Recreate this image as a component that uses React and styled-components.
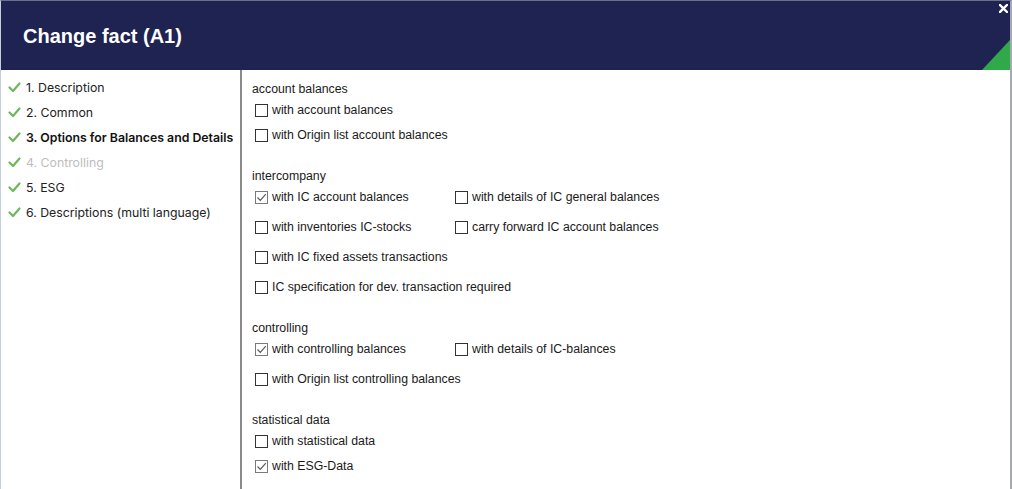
import styled, { createGlobalStyle } from "styled-components"

const GlobalStyle = createGlobalStyle`
  html, body {
    margin: 0;
    padding: 0;
    background: #ffffff;
  }
  * { box-sizing: border-box; }
`

const steps = [
  { label: "1. Description", state: "done" },
  { label: "2. Common", state: "done" },
  { label: "3. Options for Balances and Details", state: "active" },
  { label: "4. Controlling", state: "disabled" },
  { label: "5. ESG", state: "done" },
  { label: "6. Descriptions (multi language)", state: "done" },
]

const sections = [
  {
    title: "account balances",
    columns: 1,
    items: [
      { label: "with account balances" },
      { label: "with Origin list account balances" },
    ],
  },
  {
    title: "intercompany",
    columns: 2,
    items: [
      { label: "with IC account balances", checked: true },
      { label: "with details of IC general balances" },
      { label: "with inventories IC-stocks" },
      { label: "carry forward IC account balances" },
      { label: "with IC fixed assets transactions", wide: true },
      { label: "IC specification for dev. transaction required", wide: true },
    ],
  },
  {
    title: "controlling",
    columns: 2,
    items: [
      { label: "with controlling balances", checked: true },
      { label: "with details of IC-balances" },
      { label: "with Origin list controlling balances", wide: true },
    ],
  },
  {
    title: "statistical data",
    columns: 1,
    items: [
      { label: "with statistical data" },
      { label: "with ESG-Data", checked: true },
    ],
  },
]

export default function App () {
  return (
    <>
      <GlobalStyle />
      <Dialog>
        <Header>
          <Title>Change fact (A1)</Title>
          <CloseButton aria-label="close">
            <svg width="9" height="9" viewBox="0 0 9 9">
              <path d="M1 1 L8 8 M8 1 L1 8" stroke="#fff" strokeWidth="2.4" strokeLinecap="square" />
            </svg>
          </CloseButton>
          <Corner />
        </Header>

        <Body>
          <Sidebar>
            {steps.map(step => (
              <Step key={step.label} $state={step.state}>
                <CheckIcon width="13" height="11" viewBox="0 0 13 11">
                  <path d="M1.5 5.5 L5 9 L11.5 1.5" fill="none" stroke="#6cb85a" strokeWidth="2.2" strokeLinecap="round" strokeLinejoin="round" />
                </CheckIcon>
                {step.label}
              </Step>
            ))}
          </Sidebar>

          <Content>
            {sections.map(section => (
              <Section key={section.title}>
                <SectionTitle>{section.title}</SectionTitle>
                <Options $columns={section.columns}>
                  {section.items.map(item => (
                    <Option key={item.label} $wide={item.wide}>
                      <Box $checked={item.checked}>
                        {item.checked && (
                          <svg width="11" height="11" viewBox="0 0 11 11">
                            <path d="M1.5 5.5 L4.3 8.3 L9.8 2.2" fill="none" stroke="#5a5a5a" strokeWidth="1.2" />
                          </svg>
                        )}
                      </Box>
                      {item.label}
                    </Option>
                  ))}
                </Options>
              </Section>
            ))}
          </Content>
        </Body>
      </Dialog>
    </>
  )
}

const Dialog = styled.div`
  width: 1012px;
  height: 489px;
  display: flex;
  flex-direction: column;
  border-top: 1px solid #6b7088;
  border-left: 1px solid #c6ceda;
  border-right: 2px solid #a7a9b2;
  overflow: hidden;
  background: #fff;
`

const Header = styled.header`
  position: relative;
  height: 69px;
  flex: none;
  display: flex;
  align-items: center;
  padding-left: 22px;
  padding-top: 2px;
  background: #1f2352;
`

const Title = styled.h1`
  margin: 0;
  font-family: "Liberation Sans", Arial, sans-serif;
  font-size: 20px;
  font-weight: 700;
  color: #ffffff;
`

const CloseButton = styled.button`
  position: absolute;
  top: 3px;
  right: 2px;
  padding: 0;
  border: 0;
  width: 9px;
  height: 9px;
  display: flex;
  background: transparent;
`

const Corner = styled.div`
  position: absolute;
  right: 0;
  bottom: 0;
  width: 28px;
  height: 30px;
  background: #30a94b;
  clip-path: polygon(100% 0, 100% 100%, 0 100%);
`

const Body = styled.div`
  flex: 1;
  display: flex;
  min-height: 0;
`

const Sidebar = styled.nav`
  width: 241px;
  flex: none;
  padding-top: 5px;
  padding-left: 7px;
  border-right: 2px solid #8a8a8a;
  display: flex;
  flex-direction: column;
`

const Step = styled.div`
  height: 25px;
  display: flex;
  align-items: center;
  gap: 5px;
  font-family: Inter, "Noto Sans", sans-serif;
  font-size: 12.3px;
  font-weight: ${p => (p.$state === "active" ? 600 : 400)};
  color: ${p => (p.$state === "disabled" ? "#bdbdbd" : p.$state === "active" ? "#111" : "#222")};
  white-space: nowrap;
`

const CheckIcon = styled.svg`
  flex: none;
  margin-top: -1px;
`

const Content = styled.main`
  flex: 1;
  padding: 10px 0 0 10px;
  display: flex;
  flex-direction: column;
  gap: 20px;
  font-family: "Liberation Sans", Arial, sans-serif;
  font-size: 12.3px;
  color: #1a1a1a;
`

const Section = styled.section`
  display: flex;
  flex-direction: column;
`

const SectionTitle = styled.div`
  height: 18px;
  line-height: 18px;
`

const Options = styled.div`
  display: grid;
  grid-template-columns: ${p => (p.$columns === 2 ? "200px 260px" : "460px")};
  row-gap: ${p => (p.$columns === 2 ? "6px" : "1px")};
  justify-content: start;
`

const Option = styled.label`
  height: 24px;
  display: flex;
  align-items: center;
  gap: 4px;
  padding-left: 3px;
  white-space: nowrap;
  grid-column: ${p => (p.$wide ? "1 / -1" : "auto")};
`

const Box = styled.span`
  width: 13px;
  height: 13px;
  flex: none;
  display: flex;
  align-items: center;
  justify-content: center;
  border: 1px solid ${p => (p.$checked ? "#7a7a7a" : "#333")};
  background: #fff;
`
